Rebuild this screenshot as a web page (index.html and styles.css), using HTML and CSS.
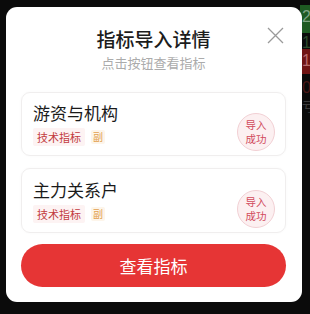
FILE: index.html
```html
<!DOCTYPE html>
<html lang="zh-CN">
<head>
<meta charset="utf-8">
<link rel="stylesheet" href="styles.css">
</head>
<body>
<div class="backdrop-strip">
  <div class="cell green">2</div>
  <div class="cell dim-green">1</div>
  <div class="cell red">1</div>
  <div class="cell dim-red">0</div>
  <div class="cell gray">亏</div>
</div>
<div class="modal">
  <div class="header">
    <h1 class="title">指标导入详情</h1>
    <p class="subtitle">点击按钮查看指标</p>
    <button class="close" aria-label="关闭">
      <svg width="17" height="17" viewBox="0 0 17 17"><path d="M1 1L16 16M16 1L1 16" stroke="#9a9a9a" stroke-width="1.3" fill="none"/></svg>
    </button>
  </div>
  <div class="list">
    <div class="card">
      <div class="info">
        <div class="name">游资与机构</div>
        <div class="tags"><span class="tag">技术指标</span><span class="tag vice">副</span></div>
      </div>
      <div class="badge">导入<br>成功</div>
    </div>
    <div class="card">
      <div class="info">
        <div class="name">主力关系户</div>
        <div class="tags"><span class="tag">技术指标</span><span class="tag vice">副</span></div>
      </div>
      <div class="badge">导入<br>成功</div>
    </div>
  </div>
  <button class="primary">查看指标</button>
</div>
</body>
</html>
```
FILE: styles.css
```css
* { box-sizing: border-box; }
html, body { margin: 0; }
body {
  width: 310px;
  height: 314px;
  background: #0b0b0b;
  padding: 7px 8px 0 6px;
  font-family: "Noto Sans CJK SC", "Noto Sans", sans-serif;
  position: relative;
  overflow: hidden;
}
.backdrop-strip {
  position: absolute;
  right: 0;
  top: 5px;
  width: 10px;
  display: flex;
  flex-direction: column;
  font-family: "Liberation Sans", sans-serif;
  font-size: 16px;
}
.cell { line-height: 1; overflow: hidden; padding-left: 2px; }
.green { background: #1e5a22; color: #7fa382; height: 28px; padding-top: 4px; }
.dim-green { color: #2c4a2c; height: 16px; padding-top: 2px; }
.red { background: #6f1414; color: #b56a6a; height: 25px; padding-top: 4px; }
.dim-red { color: #4a1616; height: 22px; padding-top: 6px; }
.gray { color: #3a3a3a; font-size: 13px; height: 20px; padding-top: 4px; }

.modal {
  position: relative;
  width: 296px;
  height: 295px;
  background: #fff;
  border-radius: 11px;
  padding: 19px 16px 0 15px;
  display: flex;
  flex-direction: column;
}
.header { position: relative; text-align: center; }
.title {
  margin: 0;
  font-size: 19px;
  line-height: 26px;
  font-weight: 500;
  color: #1c1c1c;
}
.subtitle {
  margin: 2px 0 0;
  font-size: 13px;
  line-height: 18px;
  color: #ababab;
}
.close {
  position: absolute;
  right: 2px;
  top: 1px;
  border: 0;
  padding: 0;
  background: none;
  width: 17px;
  height: 17px;
}
.close svg { display: block; }
.list {
  margin-top: 20px;
  display: flex;
  flex-direction: column;
  gap: 12px;
}
.card {
  height: 64px;
  border: 1px solid #f0eeee;
  border-radius: 9px;
  padding: 8px 10px 0 11px;
  display: flex;
  justify-content: space-between;
  box-shadow: 0 0 3px rgba(0,0,0,0.03);
}
.card + .card { height: 65px; padding-top: 9px; }
.name {
  font-size: 17px;
  line-height: 24px;
  color: #1a1a1a;
}
.tags {
  margin-top: 3px;
  display: flex;
  gap: 6px;
  align-items: center;
}
.tag {
  font-size: 11px;
  line-height: 18px;
  color: #c23a3e;
  background: #fdf3f3;
  padding: 0 4px;
  border-radius: 2px;
}
.tag.vice {
  color: #e2a04e;
  background: #fdf5ea;
  font-size: 10px;
  padding: 0 2px;
  line-height: 14px;
}
.badge {
  align-self: center;
  margin-top: 8px;
  width: 38px;
  height: 38px;
  border-radius: 50%;
  background: #fcf0f1;
  border: 1px solid #f2d0d4;
  color: #d14a5c;
  font-size: 10.5px;
  line-height: 14px;
  text-align: center;
  padding-top: 4px;
}
.primary {
  margin-top: 11px;
  height: 43px;
  border: 0;
  border-radius: 22px;
  background: #e63535;
  color: #fff;
  font-family: "Noto Sans CJK SC", sans-serif;
  font-size: 17px;
  width: 100%;
}
```
